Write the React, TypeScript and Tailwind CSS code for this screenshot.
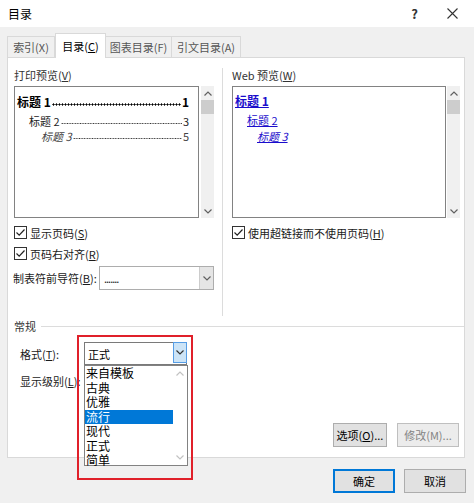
import type { ReactNode } from "react"

const font = { fontFamily: "'Noto Sans CJK SC', 'Noto Sans', sans-serif" }

const ChevronUp = ({ color = "#606060" }: { color?: string }) => (
  <svg width="8" height="5" viewBox="0 0 8 5">
    <polyline points="0.5,4.5 4,1 7.5,4.5" fill="none" stroke={color} strokeWidth="1.2" />
  </svg>
)

const ChevronDown = ({ color = "#606060" }: { color?: string }) => (
  <svg width="8" height="5" viewBox="0 0 8 5">
    <polyline points="0.5,0.5 4,4 7.5,0.5" fill="none" stroke={color} strokeWidth="1.2" />
  </svg>
)

const Checkbox = () => (
  <svg width="13" height="13" viewBox="0 0 13 13" className="shrink-0">
    <rect x="0.5" y="0.5" width="12" height="12" fill="white" stroke="#333" />
    <polyline points="2.5,6.5 5.2,9.2 10.5,3.5" fill="none" stroke="#222" strokeWidth="1.2" />
  </svg>
)

const Scrollbar = () => (
  <div className="w-[13px] h-full bg-[#f0f0f0] flex flex-col items-center">
    <div className="h-[14px] flex items-center justify-center">
      <ChevronUp />
    </div>
    <div className="w-[13px] h-[14px] bg-[#cdcdcd]" />
    <div className="flex-1" />
    <div className="h-[14px] flex items-center justify-center">
      <ChevronDown />
    </div>
  </div>
)

// dotted tab leader between title and page number
const TocLine = ({ label, page, className, bold }: { label: ReactNode; page: string; className: string; bold?: boolean }) => (
  <div className={`flex items-end whitespace-nowrap ${className}`}>
    <span className="shrink-0">{label}</span>
    <div
      className={`flex-1 mx-[1px] mb-[4px] h-[3px] bg-repeat-x ${
        bold
          ? "bg-[radial-gradient(circle,#000_0.9px,transparent_1.2px)] bg-[length:3px_3px]"
          : "bg-[radial-gradient(circle,#333_0.6px,transparent_1px)] bg-[length:2.6px_3px]"
      }`}
    />
    <span className="shrink-0">{page}</span>
  </div>
)

const Button = ({ children, width, primary, disabled }: { children: ReactNode; width: string; primary?: boolean; disabled?: boolean }) => (
  <div
    className={`${width} h-full flex items-center justify-center ${
      primary
        ? "bg-[#e1e1e1] border-2 border-[#0078d7] text-black"
        : disabled
        ? "bg-[#ececec] border border-[#bfbfbf] text-[#838383]"
        : "bg-[#e1e1e1] border border-[#adadad] text-black"
    }`}
  >
    {children}
  </div>
)

const listItems = ["来自模板", "古典", "优雅", "流行", "现代", "正式", "简单"]

export default function App() {
  return (
    <div
      className="relative w-[474px] h-[503px] bg-[#f0f0f0] overflow-hidden text-[11px] leading-[14px] whitespace-nowrap text-[#1a1a1a]"
      style={font}
    >
      {/* title bar */}
      <div className="h-[27px] bg-white flex items-center pl-[8px]">
        <span className="text-[12px] text-black">目录</span>
        <span className="ml-auto mr-[29px] text-[13px] font-bold text-[#333]">?</span>
        <svg width="11" height="11" viewBox="0 0 11 11" className="mr-[16px]">
          <path d="M0.5 0.5 L10.5 10.5 M10.5 0.5 L0.5 10.5" stroke="#333" strokeWidth="1.1" />
        </svg>
      </div>

      {/* tabs */}
      <div className="mt-[6px] h-[24px] pl-[7px] flex items-end">
        <div className="w-[48px] h-[21px] border border-b-0 border-[#d9d9d9] flex items-center justify-center text-[#555]">
          索引(X)
        </div>
        <div className="relative z-10 w-[51px] h-[25px] -mb-px bg-white border border-b-0 border-[#d9d9d9] flex items-center justify-center text-black">
          <span>
            目录(<u>C</u>)
          </span>
        </div>
        <div className="w-[66px] h-[21px] border border-l-0 border-b-0 border-[#d9d9d9] flex items-center justify-center text-[#555]">
          图表目录(F)
        </div>
        <div className="w-[69px] h-[21px] border border-l-0 border-b-0 border-[#d9d9d9] flex items-center justify-center text-[#555]">
          引文目录(A)
        </div>
      </div>

      {/* tab panel */}
      <div className="ml-[7px] w-[458px] h-[401px] bg-white border border-[#d9d9d9] flex flex-col">
        <div className="flex pl-[6px]">
          {/* print preview */}
          <div className="w-[200px] pt-[9px] flex flex-col">
            <div className="h-[16px] leading-[16px] text-[#333]">
              打印预览(<u>V</u>)
            </div>
            <div className="mt-[3px] h-[132px] flex gap-[2px]">
              <div className="w-[186px] h-full border border-[#828282] pl-[2px] pr-[9px] pt-[6px]">
                <TocLine bold className="text-[12px] font-bold leading-[17px] text-black" label="标题 1" page="1" />
                <TocLine className="pl-[12px] mt-[3px] leading-[16px] text-[#222]" label="标题 2" page="3" />
                <TocLine className="pl-[24px] leading-[15px] text-[#444]" label={<span className="italic">标题 3</span>} page="5" />
              </div>
              <Scrollbar />
            </div>
            <div className="mt-[4px] h-[21px] flex items-center gap-[3px]">
              <Checkbox />
              <span>
                显示页码(<u>S</u>)
              </span>
            </div>
            <div className="h-[21px] flex items-center gap-[3px]">
              <Checkbox />
              <span>
                页码右对齐(<u>R</u>)
              </span>
            </div>
            <div className="mt-[2px] h-[24px] flex items-center">
              <span className="-ml-[1px]">
                制表符前导符(<u>B</u>):
              </span>
              <div className="ml-auto w-[115px] h-full border border-[#adadad] flex">
                <div className="flex-1 pl-[4px] flex items-center text-[11px] tracking-[-1px]">.......</div>
                <div className="w-[14px] h-full bg-[#e5e5e5] border-l border-[#cccccc] flex items-center justify-center">
                  <ChevronDown />
                </div>
              </div>
            </div>
          </div>

          {/* separator */}
          <div className="ml-[8px] mt-[10px] w-px h-[248px] bg-[#dcdcdc]" />

          {/* web preview */}
          <div className="ml-[9px] w-[228px] pt-[9px] flex flex-col">
            <div className="h-[16px] leading-[16px] text-[#333]">
              Web 预览(<u>W</u>)
            </div>
            <div className="mt-[3px] h-[132px] flex gap-[1px]">
              <div className="w-[214px] h-full border border-[#828282] pl-[2px] pt-[5px] text-[#1a0dcc]">
                <div className="text-[12px] font-bold leading-[18px] underline">标题 1</div>
                <div className="pl-[12px] mt-[2px] leading-[16px] underline">标题 2</div>
                <div className="pl-[22px] leading-[16px] underline italic">标题 3</div>
              </div>
              <Scrollbar />
            </div>
            <div className="mt-[4px] h-[21px] flex items-center gap-[3px]">
              <Checkbox />
              <span>
                使用超链接而不使用页码(<u>H</u>)
              </span>
            </div>
          </div>
        </div>

        {/* general */}
        <div className="mt-[2px] h-[16px] pl-[6px] flex items-center">
          <span className="text-[#333]">常规</span>
          <div className="flex-1 h-px bg-[#dcdcdc] ml-[5px]" />
        </div>

        <div className="mt-[8px] h-[23px] pl-[12px] flex items-center">
          <span className="w-[64px]">
            格式(<u>T</u>):
          </span>
          <div className="w-[103px] h-full border border-[#7a7a7a] flex">
            <div className="flex-1 pl-[3px] flex items-center text-black">正式</div>
            <div className="w-[14px] h-full bg-[#cce4f7] border border-[#569de5] -m-px flex items-center justify-center">
              <ChevronDown color="#333" />
            </div>
          </div>
        </div>

        <div className="mt-[4px] h-[23px] pl-[12px] flex items-center">
          <span>
            显示级别(<u>L</u>):
          </span>
        </div>

        <div className="mt-[31px] h-[24px] pr-[5px] flex justify-end gap-[10px]">
          <Button width="w-[54px]">
            <span>
              选项(<u>O</u>)...
            </span>
          </Button>
          <Button width="w-[62px]" disabled>
            修改(M)...
          </Button>
        </div>
      </div>

      {/* dialog buttons */}
      <div className="mt-[11px] h-[24px] pr-[8px] flex justify-end gap-[9px]">
        <Button width="w-[62px]" primary>
          确定
        </Button>
        <Button width="w-[62px]">取消</Button>
      </div>

      {/* open dropdown list */}
      <div className="absolute left-[84px] top-[365px] w-[104px] h-[101px] bg-white border border-[#828282] flex">
        <div className="w-[88px] flex flex-col">
          {listItems.map((item) => (
            <div
              key={item}
              className={`h-[14.5px] leading-[14.5px] pl-[1px] text-[12px] ${
                item === "流行" ? "bg-[#0078d7] text-white" : "text-black"
              }`}
            >
              {item}
            </div>
          ))}
        </div>
        <div className="flex-1 flex flex-col items-center justify-between py-[5px]">
          <ChevronUp color="#c2c2c2" />
          <ChevronDown color="#c2c2c2" />
        </div>
      </div>

      {/* annotation */}
      <div className="absolute left-[77px] top-[335px] w-[116px] h-[145px] border-2 border-[#e0202a]" />
    </div>
  )
}
